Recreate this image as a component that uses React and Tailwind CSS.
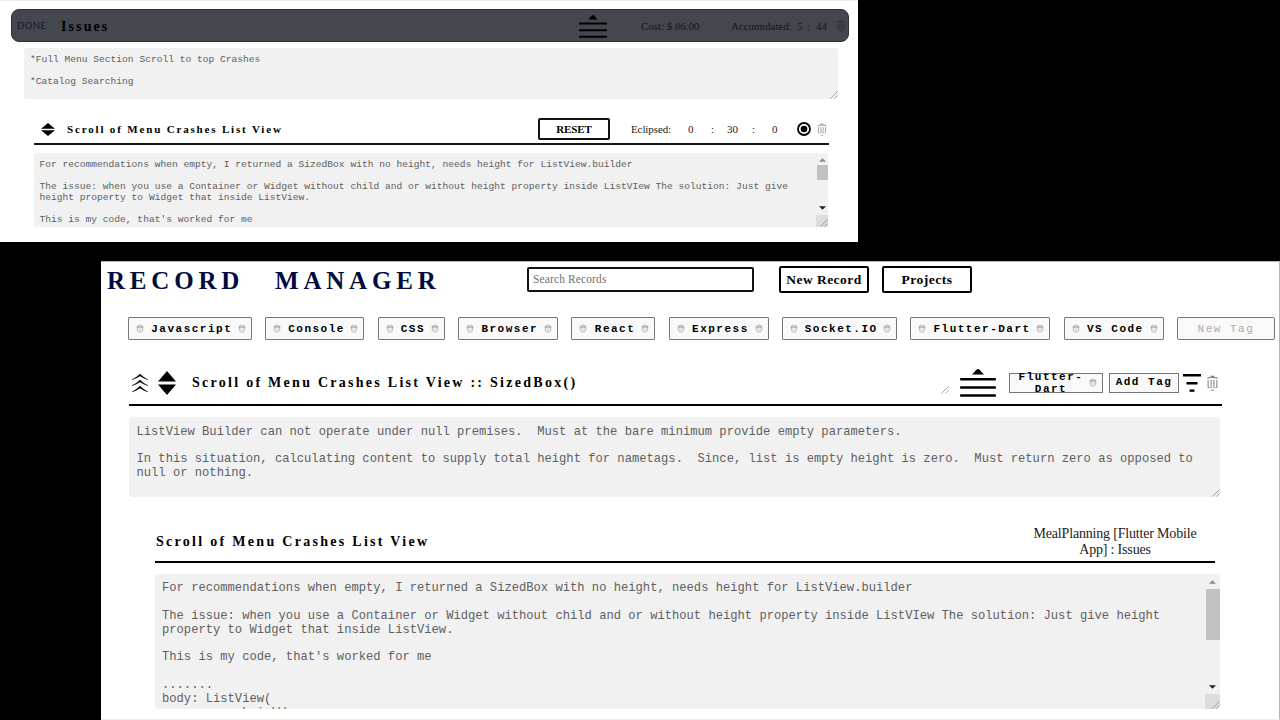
const SERIF = "font-['Liberation_Serif',serif]";
const MONO = "font-['Liberation_Mono',monospace]";

function Trash({ className }) {
  return (
    <svg viewBox="0 0 12 16" className={className} fill="none" stroke="currentColor">
      <path d="M1 3.6C2 2 10 2 11 3.6" strokeWidth="1.4" />
      <path d="M4 1.4h4" strokeWidth="1.4" />
      <path d="M1.6 5v7l1.4 1.2M4.6 5v8M7.4 5v8M10.4 5v7L9 13.2" strokeWidth="1.1" />
      <path d="M4.5 15.2h3" strokeWidth="1" />
    </svg>
  );
}

function Bin() {
  return (
    <svg viewBox="0 0 8 9" className="w-2 h-[9px] shrink-0" fill="none" stroke="#b0b0b0">
      <path d="M1 3C1 .6 7 .6 7 3L6.6 6.4C6.4 8.6 1.6 8.6 1.4 6.4z" fill="#e6e6e6" strokeWidth=".8" />
      <path d="M1 3h6" stroke="#8f8f8f" strokeWidth=".9" />
    </svg>
  );
}

function Sorter({ className }) {
  return (
    <svg viewBox="0 0 18 24" preserveAspectRatio="none" className={className} fill="#000">
      <path d="M0 10.6 9 0l9 10.6zM0 13.4h18L9 24z" />
    </svg>
  );
}

function Stack({ className }) {
  return (
    <svg viewBox="0 0 36 28" preserveAspectRatio="none" className={className} fill="#000">
      <path d="M11.5 5.6C14 4.6 16 0 18 0s4 4.6 6.5 5.6z" />
      <rect y="9" width="36" height="2.6" rx="1" />
      <rect y="17.2" width="36" height="2.6" rx="1" />
      <rect y="25.2" width="36" height="2.6" rx="1" />
    </svg>
  );
}

function Grip({ className = "" }) {
  return (
    <svg viewBox="0 0 8 8" className={`w-2 h-2 ${className}`} stroke="#999" strokeWidth=".9">
      <path d="M.5 7.5l7-7M4.5 7.5l3-3" />
    </svg>
  );
}

function Scrollbar({ width, thumb, corner, arrowGap }) {
  return (
    <div className={`flex shrink-0 flex-col items-center ${width}`}>
      <svg viewBox="0 0 8 4" className={`w-[7px] h-1 shrink-0 ${arrowGap}`} fill="#8a8a8a"><path d="M0 4l4-4 4 4z" /></svg>
      <div className={`bg-[#c1c1c1] ${thumb}`} />
      <div className="grow" />
      <svg viewBox="0 0 8 4" className="mb-[5px] w-[7px] h-1 shrink-0" fill="#222"><path d="M0 0l4 4 4-4z" /></svg>
      <div className={`flex w-full items-end justify-end bg-[#dcdcdc] ${corner}`}><Grip /></div>
    </div>
  );
}

const tags = [
  ["Javascript", "w-[124px]"],
  ["Console", "w-[99px]"],
  ["CSS", "w-[67px]"],
  ["Browser", "w-[100px]"],
  ["React", "w-[84px]"],
  ["Express", "w-[100px]"],
  ["Socket.IO", "w-[115px]"],
  ["Flutter-Dart", "w-[140px]"],
  ["VS Code", "w-[100px]"],
];

const tagText = `${MONO} text-[11px] font-bold tracking-[1.5px]`;

function IssuesPanel() {
  return (
    <section className="flex h-[242px] w-[858px] flex-col border-t border-[#eee] bg-white">
      <header className="mt-2 ml-[11px] flex h-[33px] w-[838px] shrink-0 items-center rounded-[8px] border border-[#2d2f3a] bg-[#45474f] pt-px">
        <span className="ml-[5px] w-[44px] font-[Lato,sans-serif] text-[9.5px] tracking-[.5px] text-[#111a2c]">DONE</span>
        <h2 className={`${SERIF} w-[518px] text-[14px] font-bold tracking-[2.1px]`}>Issues</h2>
        <Stack className="h-[23px] w-7 shrink-0" />
        <span className={`${SERIF} ml-[34px] w-[90px] whitespace-nowrap text-[11px] tracking-[-.05px] text-[#161616]`}>Cost: $ 86.00</span>
        <span className={`${SERIF} flex text-[11px] text-[#161616]`}>
          <span className="w-[66px] tracking-[-.1px]">Accumulated:</span>
          <span className="w-[10px]">5</span>
          <span className="w-[9px]">:</span>
          <span className="w-[20px]">44</span>
        </span>
        <Trash className="h-[12px] w-[10px] text-[#2b2d35]" />
      </header>

      <div className={`${MONO} mt-[6px] ml-6 flex h-[51px] w-[814px] shrink-0 rounded-[3px] bg-[#f1f1f1] text-[9.6px] leading-[11px] text-[#606060]`}>
        <p className="grow whitespace-pre pt-[6px] pl-[6px]">{"*Full Menu Section Scroll to top Crashes\n\n*Catalog Searching"}</p>
        <Grip className="self-end" />
      </div>

      <div className="ml-[34px] flex h-[46px] w-[795px] shrink-0 items-center border-b-2 border-[#181818] pt-[16px]">
        <Sorter className="ml-[7px] h-[13px] w-[14px]" />
        <h3 className={`${SERIF} ml-3 w-[471px] pt-px text-[11px] font-bold tracking-[1.83px]`}>Scroll of Menu Crashes List View</h3>
        <button className={`${SERIF} flex h-[22px] w-[72px] shrink-0 items-center justify-center rounded-[2px] border-2 border-[#111] text-[11px] font-bold tracking-[-.1px]`}>RESET</button>
        <div className={`${SERIF} ml-[21px] flex pt-px text-[11px] text-[#222]`}>
          <span className="w-[57px] tracking-[-.1px]">Eclipsed:</span>
          <span className="w-[23px]">0</span>
          <span className="w-[16px]">:</span>
          <span className="w-[25px]">30</span>
          <span className="w-[20px]">:</span>
          <span className="w-[25px]">0</span>
        </div>
        <svg viewBox="0 0 14 14" className="h-[14px] w-[14px] shrink-0"><circle cx="7" cy="7" r="6" fill="none" stroke="#000" strokeWidth="1.8" /><circle cx="7" cy="7" r="3.3" /></svg>
        <Trash className="ml-[6px] h-[13px] w-[10px] text-[#999]" />
      </div>

      <div className={`${MONO} mt-2 ml-[34px] flex h-[74px] w-[794px] shrink-0 rounded-[3px] bg-[#f1f1f1] text-[9.6px] leading-[11px] text-[#606060]`}>
        <p className="grow whitespace-pre pt-[6px] pl-[5.5px]">{"For recommendations when empty, I returned a SizedBox with no height, needs height for ListView.builder\n\nThe issue: when you use a Container or Widget without child and or without height property inside ListVIew The solution: Just give\nheight property to Widget that inside ListView.\n\nThis is my code, that's worked for me"}</p>
        <Scrollbar width="w-3" thumb="h-[15px] w-[11px]" corner="h-3" arrowGap="mt-[5px] mb-[3px]" />
      </div>
    </section>
  );
}

function RecordsPanel() {
  return (
    <section className="mt-[19px] ml-[101px] flex h-[459px] w-[1179px] flex-col border-t border-r border-b border-[#b5b5b5] border-b-[#eee] bg-white">
      <header className="mt-1 flex h-[27px] shrink-0 items-center pl-[6px]">
        <h1 className={`${SERIF} flex w-[420px] pt-[2px] text-[25px] font-bold tracking-[4.8px] text-[#020b40]`}>
          <span className="w-[168px]">RECORD</span>
          <span>MANAGER</span>
        </h1>
        <div className={`${SERIF} flex h-[25px] w-[227px] items-center rounded-[2px] border-2 border-[#111] pl-1 text-[11.5px] tracking-[.12px] text-[#707070]`}>Search Records</div>
        <button className={`${SERIF} ml-[25px] h-[27px] w-[90px] whitespace-nowrap rounded-[2px] border-2 border-black text-[13.5px] leading-[23px] font-bold tracking-[.45px]`}>New Record</button>
        <button className={`${SERIF} ml-[13px] h-[27px] w-[90px] rounded-[2px] border-2 border-black text-[13.5px] leading-[23px] font-bold tracking-[.5px]`}>Projects</button>
      </header>

      <nav className="mt-[24px] ml-[27px] flex h-[23px] w-[1147px] shrink-0 justify-between">
        {tags.map(([name, width]) => (
          <div key={name} className={`flex items-center justify-between rounded-[1px] border border-[#777] bg-[#f9f9f9] pr-[5px] pl-[7px] ${width}`}>
            <Bin />
            <span className={`${tagText} whitespace-nowrap pt-[2px] pl-[1.5px]`}>{name}</span>
            <Bin />
          </div>
        ))}
        <div className={`${MONO} flex w-[98px] items-center justify-center rounded-[2px] border border-[#777] bg-[#f9f9f9] pt-[2px] text-[11px] tracking-[1.5px] text-[#aaa]`}>New Tag</div>
      </nav>

      <div className="ml-7 flex h-[66px] w-[1093px] shrink-0 items-center border-b-2 border-black pt-[21px]">
        <svg viewBox="0 0 18 20" className="ml-[2px] h-[18px] w-[18px] shrink-0">
          <path d="M0 6.4Q5 4 9 0q4 4 9 6.4-5-1.4-9-4.2Q5 5 0 6.4zM0 13Q5 10.600 9 6.600q4 4 9 6.400-5-1.400-9-4.200Q5 11.600 0 13zM0 20Q5 17.500 9 13.400q4 4 9 6.600-5-1.500-9-4.300Q5 18.500 0 20z" stroke="#000" strokeWidth=".4" />
        </svg>
        <Sorter className="ml-[9px] h-6 w-[18px] shrink-0" />
        <h2 className={`${SERIF} ml-[16px] w-[749px] shrink-0 whitespace-nowrap text-[14px] font-bold tracking-[2.27px]`}>Scroll of Menu Crashes List View :: SizedBox()</h2>
        <Grip className="mt-[14px] shrink-0" />
        <Stack className="ml-[11px] h-7 w-9 shrink-0" />
        <div className="ml-[13px] flex h-5 w-[94px] shrink-0 items-center justify-between border border-[#777] bg-[#f9f9f9] pr-[5px] pl-2">
          <span className={`${tagText} w-[66px] pt-px text-center leading-[12px]`}>Flutter-<br />Dart</span>
          <Bin />
        </div>
        <div className={`${tagText} ml-[6px] flex h-5 w-[70px] shrink-0 items-center justify-center whitespace-nowrap border border-[#777] bg-[#f9f9f9]`}>Add Tag</div>
        <svg viewBox="0 0 18 18" className="ml-1 h-[18px] w-[18px] shrink-0" stroke="#000" strokeWidth="2.4"><path d="M0 1.3h18M3.5 9.200h11M6.500 16.600h5" /></svg>
        <Trash className="ml-[5px] h-4 w-[13px] shrink-0 text-[#888]" />
      </div>

      <div className={`${MONO} mt-[11px] ml-[28px] flex h-[80px] w-[1091px] shrink-0 rounded-[4px] bg-[#f1f1f1] text-[12.15px] leading-[13.85px] text-[#606060]`}>
        <p className="grow whitespace-pre pt-[8.5px] pl-[7.5px]">{"ListView Builder can not operate under null premises.  Must at the bare minimum provide empty parameters.\n\nIn this situation, calculating content to supply total height for nametags.  Since, list is empty height is zero.  Must return zero as opposed to\nnull or nothing."}</p>
        <Grip className="self-end" />
      </div>

      <div className="ml-[54px] flex h-[66px] w-[1060px] shrink-0 items-end justify-between border-b-2 border-black">
        <h3 className={`${SERIF} mb-[9px] ml-px text-[14px] font-bold tracking-[2.29px]`}>Scroll of Menu Crashes List View</h3>
        <p className={`${SERIF} mb-[3px] w-[200px] whitespace-nowrap text-center text-[14px] leading-4 tracking-[-.18px] text-[#222]`}>MealPlanning [Flutter Mobile<br />App] : Issues</p>
      </div>

      <div className={`${MONO} mt-[11px] ml-[54px] flex h-[135px] w-[1065px] shrink-0 overflow-hidden rounded-[4px] bg-[#f1f1f1] text-[12.15px] leading-[13.85px] text-[#606060]`}>
        <p className="grow whitespace-pre pt-[8px] pl-[7px]">{"For recommendations when empty, I returned a SizedBox with no height, needs height for ListView.builder\n\nThe issue: when you use a Container or Widget without child and or without height property inside ListVIew The solution: Just give height\nproperty to Widget that inside ListView.\n\nThis is my code, that's worked for me\n\n.......\nbody: ListView(\n          shrinkWrap"}</p>
        <Scrollbar width="w-[15px]" thumb="h-[51px] w-[14px]" corner="h-[15px]" arrowGap="mt-[6px] mb-[5px]" />
      </div>
    </section>
  );
}

export default function App() {
  return (
    <main className="h-[720px] w-[1280px] overflow-hidden bg-black text-black">
      <IssuesPanel />
      <RecordsPanel />
    </main>
  );
}
